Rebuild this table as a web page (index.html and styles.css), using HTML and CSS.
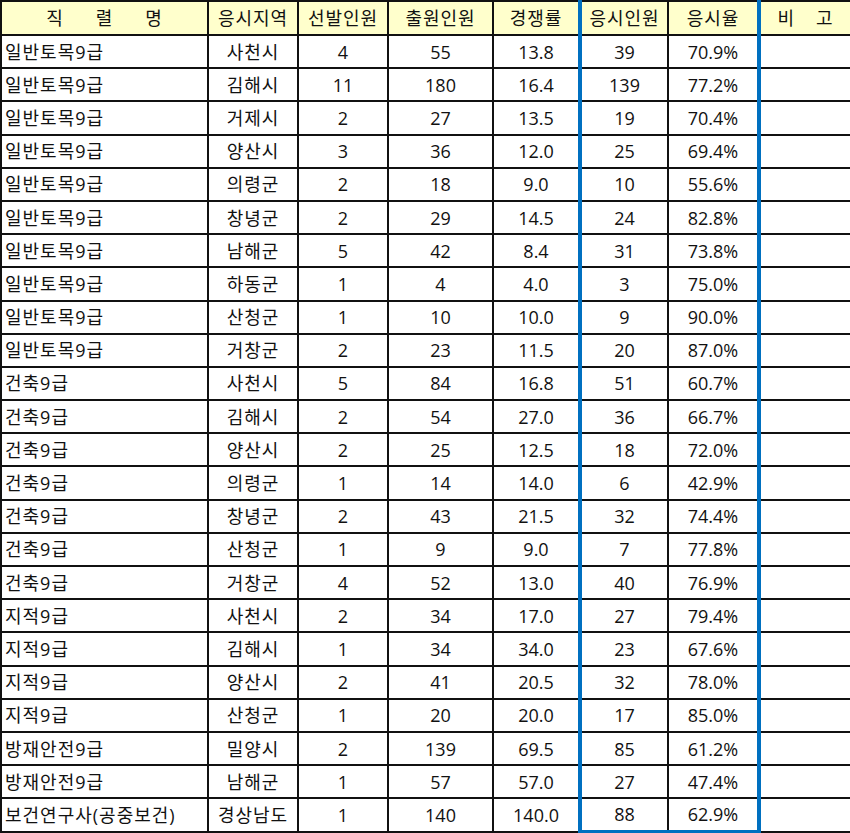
FILE: index.html
```html
<!DOCTYPE html>
<html lang="ko">
<head>
<meta charset="utf-8">
<link rel="stylesheet" href="styles.css">
</head>
<body>
<table class="sheet">
  <colgroup>
    <col class="c1"><col class="c2"><col class="c3"><col class="c4"><col class="c5"><col class="c6"><col class="c7"><col class="c8">
  </colgroup>
  <thead>
    <tr>
      <th><span class="spread wide"><span>직</span><span>렬</span><span>명</span></span></th>
      <th>응시지역</th>
      <th>선발인원</th>
      <th>출원인원</th>
      <th>경쟁률</th>
      <th class="hl-l">응시인원</th>
      <th class="hl-r">응시율</th>
      <th><span class="spread narrow"><span>비</span><span>고</span></span></th>
    </tr>
  </thead>
  <tbody>
    <tr><td class="name">일반토목9급</td><td class="area">사천시</td><td>4</td><td>55</td><td>13.8</td><td class="hl-l">39</td><td class="hl-r">70.9%</td><td></td></tr>
    <tr><td class="name">일반토목9급</td><td class="area">김해시</td><td>11</td><td>180</td><td>16.4</td><td class="hl-l">139</td><td class="hl-r">77.2%</td><td></td></tr>
    <tr><td class="name">일반토목9급</td><td class="area">거제시</td><td>2</td><td>27</td><td>13.5</td><td class="hl-l">19</td><td class="hl-r">70.4%</td><td></td></tr>
    <tr><td class="name">일반토목9급</td><td class="area">양산시</td><td>3</td><td>36</td><td>12.0</td><td class="hl-l">25</td><td class="hl-r">69.4%</td><td></td></tr>
    <tr><td class="name">일반토목9급</td><td class="area">의령군</td><td>2</td><td>18</td><td>9.0</td><td class="hl-l">10</td><td class="hl-r">55.6%</td><td></td></tr>
    <tr><td class="name">일반토목9급</td><td class="area">창녕군</td><td>2</td><td>29</td><td>14.5</td><td class="hl-l">24</td><td class="hl-r">82.8%</td><td></td></tr>
    <tr><td class="name">일반토목9급</td><td class="area">남해군</td><td>5</td><td>42</td><td>8.4</td><td class="hl-l">31</td><td class="hl-r">73.8%</td><td></td></tr>
    <tr><td class="name">일반토목9급</td><td class="area">하동군</td><td>1</td><td>4</td><td>4.0</td><td class="hl-l">3</td><td class="hl-r">75.0%</td><td></td></tr>
    <tr><td class="name">일반토목9급</td><td class="area">산청군</td><td>1</td><td>10</td><td>10.0</td><td class="hl-l">9</td><td class="hl-r">90.0%</td><td></td></tr>
    <tr><td class="name">일반토목9급</td><td class="area">거창군</td><td>2</td><td>23</td><td>11.5</td><td class="hl-l">20</td><td class="hl-r">87.0%</td><td></td></tr>
    <tr><td class="name">건축9급</td><td class="area">사천시</td><td>5</td><td>84</td><td>16.8</td><td class="hl-l">51</td><td class="hl-r">60.7%</td><td></td></tr>
    <tr><td class="name">건축9급</td><td class="area">김해시</td><td>2</td><td>54</td><td>27.0</td><td class="hl-l">36</td><td class="hl-r">66.7%</td><td></td></tr>
    <tr><td class="name">건축9급</td><td class="area">양산시</td><td>2</td><td>25</td><td>12.5</td><td class="hl-l">18</td><td class="hl-r">72.0%</td><td></td></tr>
    <tr><td class="name">건축9급</td><td class="area">의령군</td><td>1</td><td>14</td><td>14.0</td><td class="hl-l">6</td><td class="hl-r">42.9%</td><td></td></tr>
    <tr><td class="name">건축9급</td><td class="area">창녕군</td><td>2</td><td>43</td><td>21.5</td><td class="hl-l">32</td><td class="hl-r">74.4%</td><td></td></tr>
    <tr><td class="name">건축9급</td><td class="area">산청군</td><td>1</td><td>9</td><td>9.0</td><td class="hl-l">7</td><td class="hl-r">77.8%</td><td></td></tr>
    <tr><td class="name">건축9급</td><td class="area">거창군</td><td>4</td><td>52</td><td>13.0</td><td class="hl-l">40</td><td class="hl-r">76.9%</td><td></td></tr>
    <tr><td class="name">지적9급</td><td class="area">사천시</td><td>2</td><td>34</td><td>17.0</td><td class="hl-l">27</td><td class="hl-r">79.4%</td><td></td></tr>
    <tr><td class="name">지적9급</td><td class="area">김해시</td><td>1</td><td>34</td><td>34.0</td><td class="hl-l">23</td><td class="hl-r">67.6%</td><td></td></tr>
    <tr><td class="name">지적9급</td><td class="area">양산시</td><td>2</td><td>41</td><td>20.5</td><td class="hl-l">32</td><td class="hl-r">78.0%</td><td></td></tr>
    <tr><td class="name">지적9급</td><td class="area">산청군</td><td>1</td><td>20</td><td>20.0</td><td class="hl-l">17</td><td class="hl-r">85.0%</td><td></td></tr>
    <tr><td class="name">방재안전9급</td><td class="area">밀양시</td><td>2</td><td>139</td><td>69.5</td><td class="hl-l">85</td><td class="hl-r">61.2%</td><td></td></tr>
    <tr><td class="name">방재안전9급</td><td class="area">남해군</td><td>1</td><td>57</td><td>57.0</td><td class="hl-l">27</td><td class="hl-r">47.4%</td><td></td></tr>
    <tr><td class="name">보건연구사(공중보건)</td><td class="area">경상남도</td><td>1</td><td>140</td><td>140.0</td><td class="hl-l hl-b">88</td><td class="hl-r hl-b">62.9%</td><td></td></tr>
  </tbody>
</table>
</body>
</html>
```
FILE: styles.css
```css
html, body {
  margin: 0;
  padding: 0;
  background: #ffffff;
}

.sheet {
  border-collapse: collapse;
  table-layout: fixed;
  width: 850px;
  font-family: "Open Sans", "Noto Sans CJK KR", sans-serif;
  font-size: 18px;
  color: #111111;
}

.c1 { width: 207px; }
.c2 { width: 90px; }
.c3 { width: 90px; }
.c4 { width: 105px; }
.c5 { width: 87px; }
.c6 { width: 88px; }
.c7 { width: 91px; }
.c8 { width: 92px; }

.sheet th,
.sheet td {
  border: 2px solid #111111;
  padding: 0 1px;
  text-align: center;
  vertical-align: middle;
  white-space: nowrap;
  overflow: hidden;
  font-weight: normal;
  line-height: 22px;
}

.sheet thead tr {
  height: 34px;
}

.sheet tbody tr {
  height: 33.2px;
}

.sheet th {
  background: #ffffcc;
  letter-spacing: 1px;
}

.sheet td.name {
  text-align: left;
  padding-left: 3px;
  letter-spacing: 1px;
}

.sheet td.area {
  letter-spacing: 1px;
}

.spread {
  display: flex;
  justify-content: center;
}

.spread.wide {
  gap: 32px;
}

.spread.narrow {
  gap: 21px;
}

.sheet .hl-l { border-left: 4px solid #0070c0; }
.sheet .hl-r { border-right: 4px solid #0070c0; }
.sheet .hl-b { border-bottom: 4px solid #0070c0; }
```
